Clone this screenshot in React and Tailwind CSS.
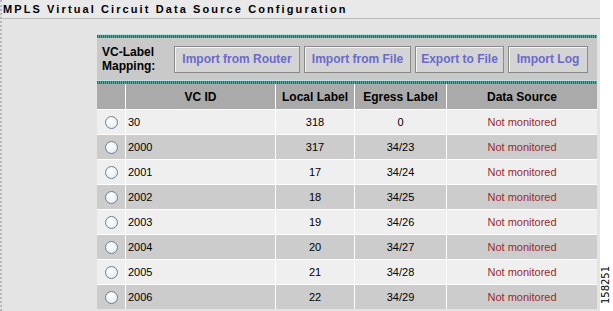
const rows = [
  { id: "30", local: "318", egress: "0" },
  { id: "2000", local: "317", egress: "34/23" },
  { id: "2001", local: "17", egress: "34/24" },
  { id: "2002", local: "18", egress: "34/25" },
  { id: "2003", local: "19", egress: "34/26" },
  { id: "2004", local: "20", egress: "34/27" },
  { id: "2005", local: "21", egress: "34/28" },
  { id: "2006", local: "22", egress: "34/29" },
];

const buttons = ["Import from Router", "Import from File", "Export to File", "Import Log"];
const buttonWidths = ["w-[126px]", "w-[107px]", "w-[89px]", "w-[80px]"];

function Stripe() {
  return (
    <div className="h-[4px] border-t border-[#bfe0dc] bg-[repeating-linear-gradient(90deg,#1f6f69_0_1px,#5fa8a0_1px_2px)]" />
  );
}

function Radio() {
  return (
    <div className="w-[13px] h-[13px] rounded-full border border-[#6f7f8f] bg-[radial-gradient(circle_at_40%_35%,#ffffff,#dde8f2)]" />
  );
}

export default function App() {
  return (
    <div className="relative w-[613px] h-[311px] overflow-hidden bg-white font-['Liberation_Sans',Arial,sans-serif] text-[11px] text-black">
      <div className="w-[600px] h-full bg-[#e4e4e4] border-l-2 border-dotted border-[#b8b8b8]">
        {/* Title */}
        <div className="h-[19px] bg-[#e9e9e9] border-b border-[#bdbdbd] pl-[1px] flex items-center">
          <h1 className="text-[11px] font-bold tracking-[2.1px] leading-none">
            MPLS Virtual Circuit Data Source Configuration
          </h1>
        </div>

        <div className="ml-[95px] mt-[15px] w-[500px]">
          <Stripe />
          {/* Toolbar */}
          <div className="h-[42px] bg-[#c9c9c9] flex items-center pl-[5px]">
            <div className="w-[72px] text-[12px] font-bold leading-[14px]">
              VC-Label
              <br />
              Mapping:
            </div>
            <div className="flex gap-[4px]">
              {buttons.map((b, i) => (
                <button
                  key={b}
                  className={`${buttonWidths[i]} h-[27px] bg-[#d4d4d4] border border-[#8a8a8a] shadow-[inset_1px_1px_0_#f4f4f4] text-[12px] font-bold text-[#6a6acb]`}
                >
                  {b}
                </button>
              ))}
            </div>
          </div>
          <Stripe />

          {/* Table */}
          <div className="grid grid-cols-[29px_150px_79px_92px_150px] bg-[#aaaaaa] h-[25px] items-stretch text-[12px] font-bold">
            <div className="border-r border-white" />
            <div className="border-r border-white flex items-center justify-center">VC ID</div>
            <div className="border-r border-white flex items-center justify-center">Local Label</div>
            <div className="border-r border-white flex items-center justify-center">Egress Label</div>
            <div className="flex items-center justify-center">Data Source</div>
          </div>
          {rows.map((r, i) => (
            <div
              key={r.id}
              className={`grid grid-cols-[29px_150px_79px_92px_150px] h-[25px] border-t border-white ${
                i % 2 === 0 ? "bg-[#efefef]" : "bg-[#cccccc]"
              }`}
            >
              <div className="border-r border-white flex items-center justify-center">
                <Radio />
              </div>
              <div className="border-r border-white flex items-center pl-[2px]">{r.id}</div>
              <div className="border-r border-white flex items-center justify-center">{r.local}</div>
              <div className="border-r border-white flex items-center justify-center">{r.egress}</div>
              <div className="flex items-center justify-center text-[#9b2a2a]">Not monitored</div>
            </div>
          ))}
        </div>
      </div>

      {/* figure number */}
      <div className="absolute left-[600px] top-[265px] w-[13px] h-[40px] flex items-center justify-center">
        <span className="-rotate-90 text-[10px] leading-none whitespace-nowrap font-['DejaVu_Sans',sans-serif]">
          158251
        </span>
      </div>
    </div>
  );
}
